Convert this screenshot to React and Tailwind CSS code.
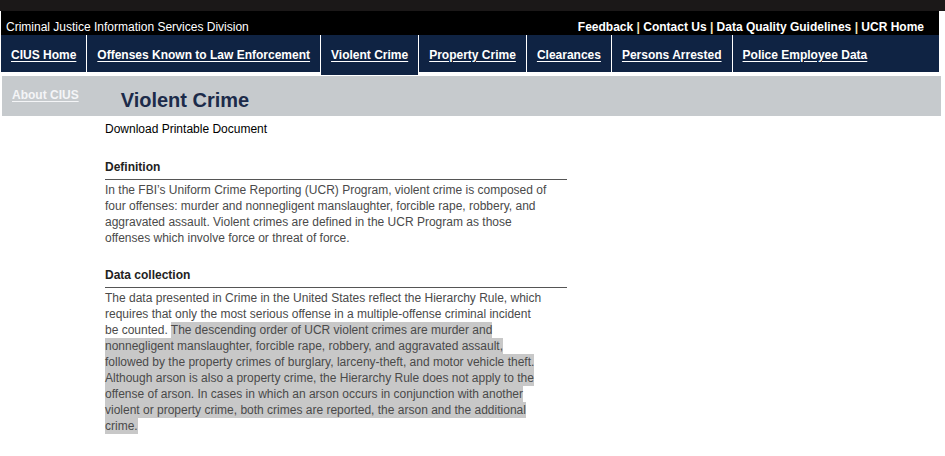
/**
 * CIUS — Violent Crime page
 */
const tabs = [
  'CIUS Home',
  'Offenses Known to Law Enforcement',
  'Violent Crime',
  'Property Crime',
  'Clearances',
  'Persons Arrested',
  'Police Employee Data',
];

const topLinks = ['Feedback', 'Contact Us', 'Data Quality Guidelines', 'UCR Home'];

const Hl = ({ children }) => (
  <span className="bg-[#c8c8c8] py-[1px] [box-decoration-break:clone]">{children}</span>
);

export default function App() {
  return (
    <div className="min-h-[456px] bg-white text-[12px] leading-[16px] font-['Liberation_Sans',Arial,sans-serif]">
      <div className="h-[11px] bg-[#1b1818]" />

      {/* utility bar */}
      <div className="ml-[1px] w-[938px] h-[24px] bg-black text-white flex items-end justify-between pl-[5px] pr-[15px] pb-[1px] leading-[14px]">
        <span>Criminal Justice Information Services Division</span>
        <span className="font-bold">
          {topLinks.map((l, i) => (
            <span key={l}>
              {i > 0 && <span className="text-[#f3e6bd]"> | </span>}
              {l}
            </span>
          ))}
        </span>
      </div>

      {/* main nav */}
      <nav className="ml-[1px] w-[938px] h-[37px] bg-[#0f2343] flex relative z-10">
        {tabs.map((t, i) => {
          const active = t === 'Violent Crime';
          const last = i === tabs.length - 1;
          return (
            <a
              key={t}
              href="#"
              className={
                active
                  ? 'h-[40px] px-[10px] pb-[1px] flex items-center bg-[#0f2343] border-r border-white font-bold text-white underline underline-offset-[2px]'
                  : last
                    ? 'h-[37px] px-[10px] pt-[2px] flex items-center font-bold text-white underline underline-offset-[2px]'
                    : 'h-[37px] px-[10px] pt-[2px] flex items-center border-r border-white font-bold text-white underline underline-offset-[2px]'
              }
            >
              {t}
            </a>
          );
        })}
      </nav>

      {/* title band */}
      <div className="mt-[4px] ml-[2px] w-[939px] h-[40px] bg-[#c6cacd] flex">
        <a href="#" className="ml-[10px] mt-[11px] font-bold text-[#f4f5f7] underline underline-offset-[2px]">
          About CIUS
        </a>
        <h1 className="ml-[42px] mt-[13px] text-[20px] leading-[22px] font-bold text-[#1c2b4a]">
          Violent Crime
        </h1>
      </div>

      {/* content */}
      <div className="ml-[105px] w-[462px] pt-[5px]">
        <p className="text-black">Download Printable Document</p>

        <h2 className="mt-[22px] pb-[4px] font-bold text-[#222] border-b border-[#555]">Definition</h2>
        <p className="pt-[2px] pr-[18px] text-[#4a4a4a]">
          In the FBI’s Uniform Crime Reporting (UCR) Program, violent crime is composed of four
          offenses: murder and nonnegligent manslaughter, forcible rape, robbery, and aggravated
          assault. Violent crimes are defined in the UCR Program as those offenses which involve
          force or threat of force.
        </p>

        <h2 className="mt-[21px] pb-[4px] font-bold text-[#222] border-b border-[#555]">Data collection</h2>
        <p className="pt-[2px] pr-[20px] text-[#4a4a4a]">
          The data presented in Crime in the United States reflect the Hierarchy Rule, which
          requires that only the most serious offense in a multiple-offense criminal incident be
          counted.{' '}
          <Hl>
            The descending order of UCR violent crimes are murder and nonnegligent manslaughter,
            forcible rape, robbery, and aggravated assault, followed by the property crimes of
            burglary, larceny-theft, and motor vehicle theft. Although arson is also a property
            crime, the Hierarchy Rule does not apply to the offense of arson. In cases in which an
            arson occurs in conjunction with another violent or property crime, both crimes are
            reported, the arson and the additional crime.
          </Hl>
        </p>
      </div>
    </div>
  );
}
